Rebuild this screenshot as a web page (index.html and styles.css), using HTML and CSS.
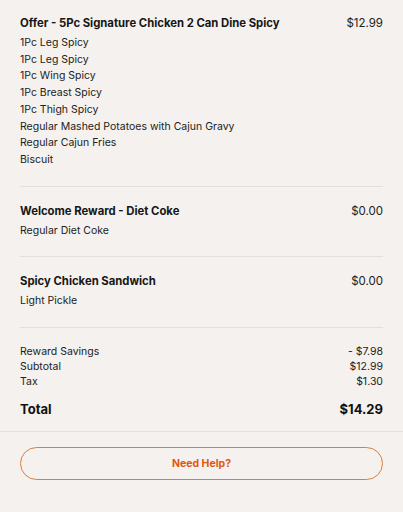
FILE: index.html
```html
<!DOCTYPE html>
<html>
<head>
<meta charset="utf-8">
<link rel="stylesheet" href="styles.css">
</head>
<body>
<div class="order">
  <div class="item first">
    <div class="item-head"><span class="name">Offer - 5Pc Signature Chicken 2 Can Dine Spicy</span><span class="price">$12.99</span></div>
    <ul class="subs">
      <li>1Pc Leg Spicy</li>
      <li>1Pc Leg Spicy</li>
      <li>1Pc Wing Spicy</li>
      <li>1Pc Breast Spicy</li>
      <li>1Pc Thigh Spicy</li>
      <li>Regular Mashed Potatoes with Cajun Gravy</li>
      <li>Regular Cajun Fries</li>
      <li>Biscuit</li>
    </ul>
  </div>
  <div class="item">
    <div class="item-head"><span class="name">Welcome Reward - Diet Coke</span><span class="price">$0.00</span></div>
    <ul class="subs"><li>Regular Diet Coke</li></ul>
  </div>
  <div class="item">
    <div class="item-head"><span class="name">Spicy Chicken Sandwich</span><span class="price">$0.00</span></div>
    <ul class="subs"><li>Light Pickle</li></ul>
  </div>
  <div class="summary">
    <div class="row"><span>Reward Savings</span><span>- $7.98</span></div>
    <div class="row"><span>Subtotal</span><span>$12.99</span></div>
    <div class="row"><span>Tax</span><span>$1.30</span></div>
    <div class="row total"><span>Total</span><span>$14.29</span></div>
  </div>
</div>
<div class="footer">
  <button class="help">Need Help?</button>
</div>
</body>
</html>
```
FILE: styles.css
```css
* { box-sizing: border-box; }
html, body {
  margin: 0;
  padding: 0;
  background: #f5f1ee;
  color: #161616;
  font-family: Inter, "Liberation Sans", sans-serif;
}
.order {
  padding: 0 20px;
}
.item {
  padding: 15px 0 17px;
  border-bottom: 1px solid #e3dfdc;
}
.item.first {
  padding-top: 14px;
}
.item-head {
  display: flex;
  justify-content: space-between;
  align-items: center;
  line-height: 18px;
}
.name {
  font-weight: 700;
  font-size: 11.3px;
}
.price {
  font-size: 11.5px;
  color: #222;
}
.subs {
  list-style: none;
  margin: 3px 0 0;
  padding: 0;
}
.subs li {
  font-size: 10.5px;
  line-height: 16.7px;
  color: #222;
}
.summary {
  padding: 16px 0 12px;
}
.row {
  display: flex;
  justify-content: space-between;
  font-size: 10.5px;
  line-height: 15px;
  color: #222;
}
.row.total {
  margin-top: 10px;
  font-size: 13px;
  font-weight: 700;
  line-height: 20px;
  color: #111;
}
.footer {
  border-top: 1px solid #e3dfdc;
  padding: 15px 20px;
}
.help {
  display: block;
  width: 100%;
  height: 33px;
  border: 1.3px solid #e07a3e;
  border-radius: 17px;
  background: transparent;
  color: #e2570f;
  font-family: Inter, "Liberation Sans", sans-serif;
  font-weight: 700;
  font-size: 10.5px;
  cursor: pointer;
}
```
